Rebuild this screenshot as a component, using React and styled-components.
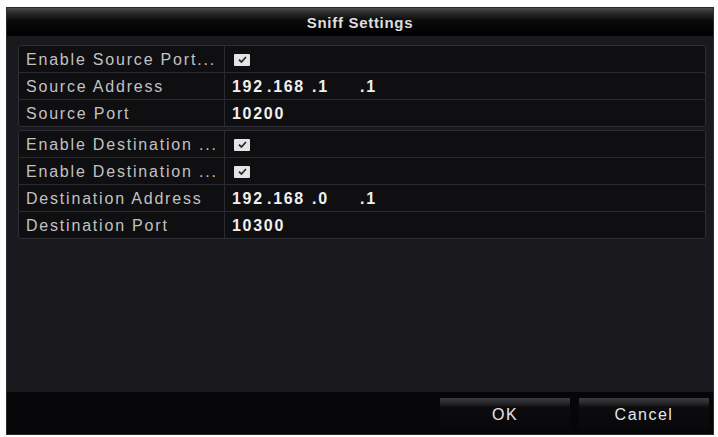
import React from "react";
import styled, { createGlobalStyle } from "styled-components";

const GlobalStyle = createGlobalStyle`
  html, body {
    margin: 0;
    padding: 0;
    background: #ffffff;
  }
  body {
    font-family: "Liberation Sans", Arial, sans-serif;
  }
`;

const Page = styled.div`
  width: 718px;
  height: 437px;
  box-sizing: border-box;
  padding: 8px 5px 3px 7px;
  background: #fdfdfd;
`;

const Dialog = styled.div`
  width: 706px;
  height: 426px;
  display: flex;
  flex-direction: column;
  background: #1a191e;
  box-shadow: 0 0 0 1px #2a2a2a;
`;

const TitleBar = styled.div`
  height: 28px;
  flex-shrink: 0;
  display: flex;
  align-items: center;
  justify-content: center;
  background: linear-gradient(
    to bottom,
    #4a4a4a 0%,
    #2a2a2a 18%,
    #0a0a0a 45%,
    #000000 100%
  );
  color: #dedede;
  font-size: 15px;
  font-weight: 700;
  letter-spacing: 0.7px;
`;

const Body = styled.div`
  flex: 1;
  padding: 9px 7px 0 11px;
  display: flex;
  flex-direction: column;
  gap: 3px;
`;

const Group = styled.div`
  border: 1px solid #2e2d33;
  border-radius: 3px;
  background: #0f0e11;
  overflow: hidden;
`;

const Row = styled.div`
  display: grid;
  grid-template-columns: 206px 1fr;
  height: 26px;
  border-bottom: 1px solid #2b2a30;
  &:last-child {
    border-bottom: none;
  }
`;

const Label = styled.div`
  display: flex;
  align-items: center;
  padding: 2px 0 0 7px;
  border-right: 1px solid #2b2a30;
  color: #c2c2c2;
  font-size: 16px;
  letter-spacing: 1.8px;
  white-space: nowrap;
  overflow: hidden;
`;

const Value = styled.div`
  display: flex;
  align-items: center;
  padding: 2px 0 0 7px;
  color: #f0f0f0;
  font-size: 16px;
  font-weight: 700;
  letter-spacing: 1.7px;
  white-space: nowrap;
`;

const Octet = styled.span`
  display: inline-block;
  width: ${(p) => p.$w}px;
`;

const CheckBox = styled.span`
  width: 16px;
  height: 12px;
  margin: -1px 0 0 2px;
  border-radius: 1px;
  background: #e4e4e4;
  display: flex;
  align-items: center;
  justify-content: center;
`;

const Footer = styled.div`
  height: 42px;
  flex-shrink: 0;
  box-sizing: border-box;
  background: #060608;
  display: flex;
  justify-content: flex-end;
  align-items: flex-start;
  gap: 9px;
  padding: 6px 4px 0 0;
`;

const Button = styled.button`
  width: 130px;
  height: 32px;
  border: none;
  padding: 0;
  background: linear-gradient(
    to bottom,
    #3c3c3e 0%,
    #2a2a2c 14%,
    #0c0c0e 30%,
    #08080a 100%
  );
  color: #e6e6e6;
  font-family: "Liberation Sans", Arial, sans-serif;
  font-size: 16px;
  letter-spacing: 1.5px;
  padding-top: 2px;
`;

const Check = () => (
  <CheckBox>
    <svg width="9" height="7" viewBox="0 0 9 7">
      <path
        d="M1 3.6 L3.4 6 L8 1"
        fill="none"
        stroke="#2a2a2a"
        strokeWidth="1.8"
      />
    </svg>
  </CheckBox>
);

const Ip = ({ parts }) => (
  <>
    <Octet $w={35}>{parts[0]}</Octet>
    <Octet $w={45}>.{parts[1]}</Octet>
    <Octet $w={48}>.{parts[2]}</Octet>
    <Octet $w={30}>.{parts[3]}</Octet>
  </>
);

const sourceRows = [
  { label: "Enable Source Port...", value: <Check /> },
  { label: "Source Address", value: <Ip parts={["192", "168", "1", "1"]} /> },
  { label: "Source Port", value: "10200" },
];

const destRows = [
  { label: "Enable Destination ...", value: <Check /> },
  { label: "Enable Destination ...", value: <Check /> },
  {
    label: "Destination Address",
    value: <Ip parts={["192", "168", "0", "1"]} />,
  },
  { label: "Destination Port", value: "10300" },
];

const SettingsGroup = ({ rows }) => (
  <Group>
    {rows.map((r, i) => (
      <Row key={i}>
        <Label>{r.label}</Label>
        <Value>{r.value}</Value>
      </Row>
    ))}
  </Group>
);

export default function App() {
  return (
    <>
      <GlobalStyle />
      <Page>
        <Dialog>
          <TitleBar>Sniff Settings</TitleBar>
          <Body>
            <SettingsGroup rows={sourceRows} />
            <SettingsGroup rows={destRows} />
          </Body>
          <Footer>
            <Button>OK</Button>
            <Button>Cancel</Button>
          </Footer>
        </Dialog>
      </Page>
    </>
  );
}
